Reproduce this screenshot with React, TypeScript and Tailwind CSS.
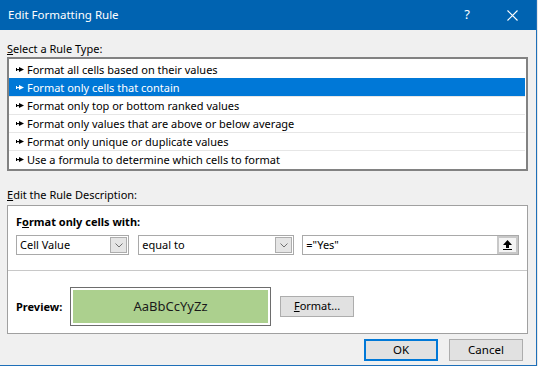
import React from 'react';

const rules = [
  'Format all cells based on their values',
  'Format only cells that contain',
  'Format only top or bottom ranked values',
  'Format only values that are above or below average',
  'Format only unique or duplicate values',
  'Use a formula to determine which cells to format',
];

const Pointer: React.FC<{ color: string }> = ({ color }) => (
  <svg width="8" height="7" viewBox="0 0 8 7" className="shrink-0">
    <rect x="0" y="2" width="1" height="3" fill={color} />
    <rect x="1" y="3" width="3" height="1.2" fill={color} />
    <polygon points="3,1 8,3.5 3,6" fill={color} />
  </svg>
);

const Chevron: React.FC = () => (
  <svg width="8" height="5" viewBox="0 0 8 5">
    <path d="M0.5 0.5 L4 4 L7.5 0.5" stroke="#707070" fill="none" strokeWidth="1" />
  </svg>
);

const Combo: React.FC<{ label: string; width: string }> = ({ label, width }) => (
  <div className={`flex h-[20px] items-stretch border border-[#a9a9a9] bg-white ${width}`}>
    <span className="flex-1 pl-[3px] leading-[18px]">{label}</span>
    <div className="my-[1px] mr-[1px] flex w-[17px] items-center justify-center border border-[#adadad] bg-[#e5e5e5]">
      <Chevron />
    </div>
  </div>
);

const App: React.FC = () => {
  return (
    <div className="flex h-[366px] w-[538px] bg-[#e8e8e8] text-[11px] text-black" style={{ fontFamily: '"Noto Sans", "Open Sans", sans-serif' }}>
      <div className="flex h-[366px] w-[537px] flex-col border-r border-b border-[#1e6fb8] bg-[#f0f0f0]">
        {/* title bar */}
        <div className="flex h-[30px] shrink-0 items-center bg-[#0063b1] text-white">
          <span className="ml-[8px] flex-1 text-[11.5px]">Edit Formatting Rule</span>
          <span className="mr-[37px] text-[13px]">?</span>
          <svg width="11" height="11" viewBox="0 0 11 11" className="mr-[18px]">
            <path d="M0.5 0.5 L10.5 10.5 M10.5 0.5 L0.5 10.5" stroke="#fff" strokeWidth="1.1" />
          </svg>
        </div>

        <div className="flex flex-col px-[7px]">
          <div className="mt-[11px] h-[16px] leading-[16px]">
            <span className="underline">S</span>elect a Rule Type:
          </div>
          <div className="mr-[1px] flex h-[114px] flex-col border-2 border-[#828282] bg-white pt-[1px] pr-[1px]">
            {rules.map((r, i) => {
              const selected = i === 1;
              return (
                <div
                  key={r}
                  className={`flex h-[18px] shrink-0 items-center gap-[3px] pl-[7px] ${
                    selected ? 'bg-[#0078d7] text-white' : 'text-black'
                  } ${i > 1 ? 'border-t border-[#e6e6e6]' : ''}`}
                >
                  <Pointer color={selected ? '#ffffff' : '#000000'} />
                  <span className="leading-[17px]">{r}</span>
                </div>
              );
            })}
          </div>

          <div className="mt-[16px] h-[16px] leading-[16px]">
            <span className="underline">E</span>dit the Rule Description:
          </div>
          <div className="mt-[2px] mr-[1px] flex h-[129px] flex-col border border-[#a0a0a0] bg-white">
            <div className="flex h-[65px] shrink-0 flex-col border-b border-[#c8c8c8] px-[8px]">
              <div className="mt-[8px] font-bold leading-[16px]">
                F<span className="underline">o</span>rmat only cells with:
              </div>
              <div className="mt-[5px] flex items-center">
                <Combo label="Cell Value" width="w-[114px]" />
                <div className="ml-[9px]">
                  <Combo label="equal to" width="w-[156px]" />
                </div>
                <div className="ml-[8px] flex h-[20px] w-[218px] items-stretch border border-[#a9a9a9] bg-white">
                  <span className="flex-1 pl-[3px] leading-[18px]">="Yes"</span>
                  <div className="flex w-[21px] items-center justify-center border-2 border-[#c8c8c8] bg-[#f4f4f4]">
                    <svg width="9" height="10" viewBox="0 0 9 10">
                      <polygon points="4.5,0 9,5 6,5 6,8 3,8 3,5 0,5" fill="#000" />
                      <rect x="0" y="9" width="9" height="1" fill="#000" />
                    </svg>
                  </div>
                </div>
              </div>
            </div>
            <div className="flex flex-1 items-start px-[8px] pt-[16px]">
              <span className="mt-[12px] w-[54px] font-bold">Preview:</span>
              <div className="flex h-[39px] w-[201px] border border-[#6d6d6d] bg-white p-[2px]">
                <div className="flex flex-1 items-center justify-center bg-[#acd08e] text-[13px] text-[#1a1a1a]">
                  AaBbCcYyZz
                </div>
              </div>
              <button className="ml-[9px] mt-[9px] h-[21px] w-[74px] border border-[#adadad] bg-[#e1e1e1] text-[11px]">
                <span className="underline">F</span>ormat...
              </button>
            </div>
          </div>

          <div className="mt-[5px] flex justify-end gap-[11px] pr-[6px]">
            <button className="h-[22px] w-[74px] border-2 border-[#0078d7] bg-[#e1e1e1] text-[11.5px]">OK</button>
            <button className="h-[22px] w-[74px] border border-[#adadad] bg-[#e1e1e1] text-[11.5px]">Cancel</button>
          </div>
        </div>
      </div>
    </div>
  );
};

export default App;
